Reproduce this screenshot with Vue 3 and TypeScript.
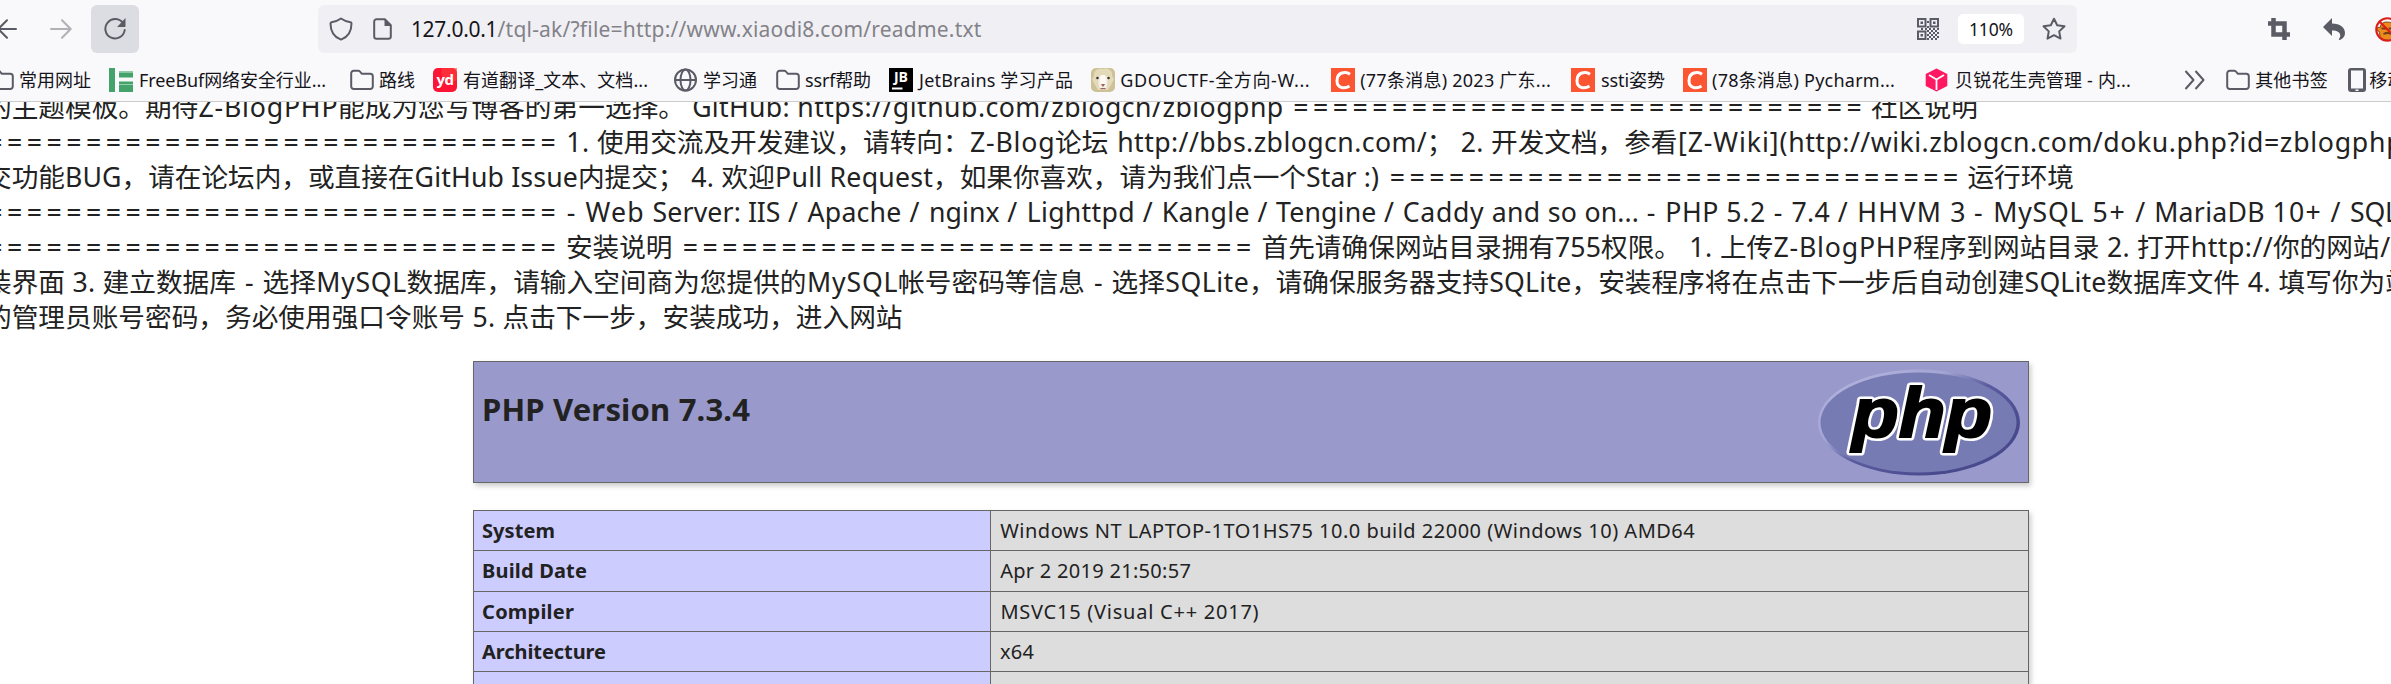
<script setup lang="ts">
type Segment = [text: string, end: number]

interface Bookmark {
  icon: string
  left: number
  label: string
  text: number
  end: number
}

// Spreads letters so that a run of text takes exactly the given width.
const vFit = {
  mounted(el: HTMLElement, binding: { value: number }) {
    const natural = el.getBoundingClientRect().width
    const count = Array.from(el.textContent ?? '').length
    const spacing = (binding.value - natural) / count
    el.style.letterSpacing = `${spacing}px`
    el.style.textIndent = `${spacing / 2}px`
    el.style.width = `${binding.value}px`
  },
}

const lineStart = -15
const rule = '='.repeat(29)

const lines: Segment[][] = [
  [['的主题模板。', 145], ['期待', 198], ['Z-BlogPHP', 338], ['能成为您写博客的第一选择。', 685], [' ', 692], ['GitHub: ', 797], ['https://github.com/zblogcn/zblogphp', 1283.5], [' ', 1291], [rule, 1864], [' ', 1871], ['社区说明', 1978]],
  [[rule, 558], [' ', 566], ['1. ', 597], ['使用交流及开发建议，请转向：', 969.5], ['Z-Blog', 1055], ['论坛', 1108.5], [' ', 1117], ['http://bbs.zblogcn.com/', 1427], ['；', 1453], [' ', 1460.5], ['2. ', 1491], ['开发文档，参看', 1677.5], ['[Z-Wiki](', 1788], ['http://', 1870.5], ['wiki.zblogcn.com/', 2103], ['doku.php?id=', 2279.5], ['zblogphp', 2403]],
  [['交功能', 65], ['BUG', 121.5], ['，请在论坛内，或直接在', 414.5], ['GitHub Issue', 578], ['内提交；', 684.5], [' ', 691], ['4. ', 721.5], ['欢迎', 775], ['Pull Request', 933], ['，如果你喜欢，请为我们点一个', 1306], ['Star :)', 1379], [' ', 1387.5], [rule, 1960.5], [' ', 1967.5], ['运行环境', 2074]],
  [[rule, 558], [' ', 566], ['- ', 585], ['Web ', 652.5], ['Server: ', 748], ['IIS ', 787], ['/ ', 807.5], ['Apache ', 908.5], ['/ ', 929], ['nginx ', 1006.5], ['/ ', 1026.5], ['Lighttpd ', 1142], ['/ ', 1161.5], ['Kangle ', 1257], ['/ ', 1276], ['Tengine ', 1383.5], ['/ ', 1402.5], ['Caddy ', 1491.5], ['and ', 1547.5], ['so ', 1584.5], ['on... ', 1646], ['- ', 1665], ['PHP ', 1726], ['5.2 ', 1773], ['- ', 1791.5], ['7.4 ', 1837], ['/ ', 1856.5], ['HHVM ', 1950], ['3 ', 1973], ['- ', 1993], ['MySQL ', 2091.5], ['5+ ', 2134.5], ['/ ', 2154], ['MariaDB ', 2272], ['10+ ', 2329.5], ['/ ', 2350], ['SQLite', 2430]],
  [[rule, 558], [' ', 566], ['安装说明', 672.5], [' ', 680.5], [rule, 1253.5], [' ', 1261.5], ['首先请确保网站目录拥有', 1555], ['755', 1601], ['权限。', 1681], [' ', 1689], ['1. ', 1720], ['上传', 1773], ['Z-BlogPHP', 1913], ['程序到网站目录', 2099.5], [' ', 2107], ['2. ', 2137], ['打开', 2190.5], ['http://', 2273], ['你的网站', 2379.5], ['/', 2391]],
  [['装界面', 65], [' ', 72.5], ['3. ', 102.5], ['建立数据库', 236], [' - ', 262.5], ['选择', 316], ['MySQL', 406.5], ['数据库，请输入空间商为您提供的', 806.5], ['MySQL', 898], ['帐号密码等信息', 1085], [' - ', 1111.5], ['选择', 1165], ['SQLite', 1249], ['，请确保服务器支持', 1489], ['SQLite', 1571.5], ['，安装程序将在点击下一步后自动创建', 2024.5], ['SQLite', 2106.5], ['数据库文件', 2240], [' ', 2247.5], ['4. ', 2278.5], ['填写你为站', 2412]],
  [['的管理员账号密码，务必使用强口令账号', 465], [' ', 472.5], ['5. ', 502.5], ['点击下一步，安装成功，进入网站', 902.5]],
]

const widthOf = (line: Segment[], i: number): number => line[i][1] - (i ? line[i - 1][1] : lineStart)

const bookmarks: Bookmark[] = [
  { icon: 'folder', left: -10, label: '常用网址', text: 19, end: 91 },
  { icon: 'freebuf', left: 109, label: 'FreeBuf网络安全行业...', text: 139, end: 326 },
  { icon: 'folder', left: 350, label: '路线', text: 379, end: 415 },
  { icon: 'youdao', left: 433, label: '有道翻译_文本、文档...', text: 463, end: 648 },
  { icon: 'globe', left: 674, label: '学习通', text: 703, end: 757 },
  { icon: 'folder', left: 776, label: 'ssrf帮助', text: 805, end: 871 },
  { icon: 'jetbrains', left: 889, label: 'JetBrains 学习产品', text: 919, end: 1073 },
  { icon: 'sheep', left: 1091, label: 'GDOUCTF-全方向-W...', text: 1120, end: 1310 },
  { icon: 'csdn', left: 1331, label: '(77条消息) 2023 广东...', text: 1360, end: 1551 },
  { icon: 'csdn', left: 1571, label: 'ssti姿势', text: 1601, end: 1665 },
  { icon: 'csdn', left: 1683, label: '(78条消息) Pycharm...', text: 1712, end: 1895 },
  { icon: 'cube', left: 1925, label: '贝锐花生壳管理 - 内...', text: 1955, end: 2131 },
  { icon: 'more', left: 2183, label: '', text: 2207, end: 2207 },
  { icon: 'folder', left: 2226, label: '其他书签', text: 2255, end: 2328 },
  { icon: 'phone', left: 2345, label: '移动设备上的书签', text: 2369, end: 2515 },
]

const gapBefore = (i: number): number => bookmarks[i].left - (i ? bookmarks[i - 1].end : 0)

const info = [
  { name: 'System', nameWidth: 73, value: 'Windows NT LAPTOP-1TO1HS75 10.0 build 22000 (Windows 10) AMD64', width: 695 },
  { name: 'Build Date', nameWidth: 105, value: 'Apr 2 2019 21:50:57', width: 191 },
  { name: 'Compiler', nameWidth: 92, value: 'MSVC15 (Visual C++ 2017)', width: 259 },
  { name: 'Architecture', nameWidth: 124, value: 'x64', width: 34 },
  { name: 'Configure Command', nameWidth: 188, value: '', width: 0 },
]
</script>

<template>
  <div class="window">
    <header class="chrome">
      <nav class="toolbar">
        <svg class="back" viewBox="0 0 24 24"><path d="M21 12H4M12 3.2 3.3 12l8.700 8.800" /></svg>
        <svg class="forward" viewBox="0 0 24 24"><path d="M2 12h19.500M13 3.200 21.700 12 13 20.800" /></svg>
        <div class="reload">
          <svg viewBox="0 0 24 24">
            <path d="M20.200 6.500A9.700 9.700 0 1 0 21.700 13" />
            <path class="solid" d="M22.500 1v8.300a.7.7 0 0 1-.7.7h-7.700z" />
          </svg>
        </div>
        <div class="urlbar">
          <svg class="shield" viewBox="0 0 24 24"><path d="M12 1.500c3 2.200 5.800 3.200 9.500 3.700.8 0 1 .5 1 1.200C22.500 14.500 19 20 12 22.600 5 20 1.500 14.500 1.500 6.400c0-.7.3-1.100 1-1.200C6.200 4.700 9 3.700 12 1.500z" /></svg>
          <svg class="page" viewBox="0 0 20 22"><path d="M3.500 1.200h8.300l6 6v11.300a2.300 2.300 0 0 1-2.300 2.300h-12a2.300 2.300 0 0 1-2.300-2.300v-15a2.300 2.300 0 0 1 2.300-2.300z" /><path class="solid" d="M11.500 1v7h6.800z" /></svg>
          <div class="address"><span v-fit="86.5" class="host">127.0.0.1</span><span v-fit="484" class="path">/tql-ak/?file=http://www.xiaodi8.com/readme.txt</span></div>
          <svg class="qr" viewBox="0 0 22 22">
            <path d="M1 1h7.500v7.500H1zM13.500 1H21v7.500h-7.500zM1 13.500h7.500V21H1z" />
            <path class="solid" d="M3.500 3.500H6V6H3.500zM16 3.500h2.500V6H16zM3.500 16H6v2.500H3.500zM10 3h2v2h-2zM10 8h2v2h-2zM4 10h2v2H4zM8 10h2v2H8zM12 10h2v2h-2zM16 10h2v2h-2zM20 10h2v2h-2zM10 12h2v2h-2zM14 12h2v2h-2zM18 12h2v2h-2zM12 14h2v2h-2zM16 14h2v2h-2zM20 14h2v2h-2zM10 16h2v2h-2zM14 16h2v2h-2zM18 16h2v2h-2zM12 18h2v2h-2zM16 18h2v2h-2zM20 18h2v2h-2zM10 20h2v2h-2zM14 20h2v2h-2zM18 20h2v2h-2z" />
          </svg>
          <div class="zoom"><span v-fit="44">110%</span></div>
          <svg class="star" viewBox="0 0 24 24"><path d="m12 1.700 3.200 6.600 7.300 1-5.300 5.100 1.300 7.200L12 18.200l-6.500 3.400 1.300-7.200L1.500 9.300l7.300-1z" /></svg>
        </div>
        <svg class="crop" viewBox="0 0 22 22"><path d="M5.500 0v16.500H22M0 5.500h16.500V22" /></svg>
        <svg class="undo" viewBox="0 0 22 22"><path d="M9 0v5.500c8 0 13 4 13 9.500 0 3-1.700 5.500-4.500 6.800-1.300.4-2-.2-1.300-1 2.800-4.600 0-8.300-7.200-8.300V18L0 9z" /></svg>
        <svg class="blocked" viewBox="0 0 24 24">
          <path class="monkey" d="M5 10c-4-1-4 3-1 4l1 5c3 4 11 4 14 0l1-5c3-1 3-5-1-4-1-7-13-7-14 0z" />
          <path class="face" d="M7 11h4M14 11h4M9 16c2-1 4-1 6 0" />
          <circle cx="12" cy="12" r="10.800" /><path class="slash" d="m4.500 4.500 15 15" />
        </svg>
      </nav>
      <nav class="bookmarks">
        <div v-for="(b, i) in bookmarks" :key="i" class="bookmark" :style="{ marginLeft: gapBefore(i) + 'px', width: b.end - b.left + 'px' }">
          <div class="favicon" :style="{ width: b.text - b.left + 'px' }">
            <svg v-if="b.icon === 'folder'" class="outline" viewBox="0 0 24 24"><path d="M1.200 18.500V5.200a2.500 2.500 0 0 1 2.500-2.500h4.500c.7 0 1.300.3 1.700.8l1.800 2.200h8.600a2.500 2.500 0 0 1 2.500 2.500v10.300a2.500 2.500 0 0 1-2.500 2.500H3.700a2.500 2.500 0 0 1-2.500-2.500z" /></svg>
            <svg v-else-if="b.icon === 'freebuf'" viewBox="0 0 24 24"><path fill="#44a36b" d="M0 0h6v24H0zM10 3.500h14v6H10zM10 13.500h14v3H10zM10 17h14v7H10z" /><path fill="#8ac6a1" d="M10 3.500h14V5H10z" /></svg>
            <svg v-else-if="b.icon === 'youdao'" viewBox="0 0 24 24"><rect width="24" height="24" rx="5" fill="#fc1434" /><circle cx="18" cy="4" r="10" fill="#ff3f3c" opacity=".6" /><text x="12" y="16.500" class="yd">yd</text></svg>
            <svg v-else-if="b.icon === 'globe'" class="outline" viewBox="0 0 24 24"><circle cx="11.500" cy="12" r="10.500" /><ellipse cx="11.500" cy="12" rx="5" ry="10.500" /><path d="M1 12h21" /></svg>
            <svg v-else-if="b.icon === 'jetbrains'" viewBox="0 0 24 24"><path d="M0 0h24v24H0z" /><text x="12" y="14" class="jb">JB</text><path fill="#fff" d="M3 19.500h10.500v2H3z" /></svg>
            <svg v-else-if="b.icon === 'sheep'" viewBox="0 0 24 24"><rect width="24" height="24" rx="5" fill="#cfc196" /><path fill="#e3dab9" d="M3 8C2 3 8-1 12 1c5-2 10 2 9 7l2 3-3 6-3 5H7l-3-5-3-6z" /><path fill="#f5eee6" d="M7 9c3-2 7-2 10 0l-1 10c-2 4-6 4-8 0z" /><path fill="#fffaf4" d="M10 7h4l1 8-3 3-3-3z" /><circle cx="6.500" cy="10" r="1.300" fill="#40352b" /><circle cx="17.500" cy="10" r="1.300" fill="#40352b" /><path fill="#99645b" d="M10 16h4l-1.500 2.500h-1zM9.500 20h5v1.200h-5z" /></svg>
            <svg v-else-if="b.icon === 'csdn'" viewBox="0 0 24 24"><path fill="#fc5531" d="M0 0h24v24H0z" /><path class="c-mark" d="M19 6.200C14.500 2.800 6 4.200 6 12.700c0 8 8 8.200 12.500 5.200" /></svg>
            <svg v-else-if="b.icon === 'cube'" viewBox="0 0 24 24"><path fill="#ff1762" d="m11.500.5 10.800 5.500v12l-10.800 5.500L.7 18V6z" /><path class="seam" d="m4 7 7.500 4.500L19 7M11.500 11.500V22" /></svg>
            <svg v-else-if="b.icon === 'more'" class="outline" viewBox="0 0 24 24"><path d="m2.500 3 8 9-8 9M12.500 3l8 9-8 9" /></svg>
            <svg v-else viewBox="0 0 24 24"><path fill="#5b5b66" fill-rule="evenodd" d="M6 0h12a3 3 0 0 1 3 3v18a3 3 0 0 1-3 3H6a3 3 0 0 1-3-3V3a3 3 0 0 1 3-3zm0 2.500v18h12v-18zM10.500 21.500h3V23h-3z" /></svg>
          </div>
          <span v-if="b.label" v-fit="b.end - b.text" class="label">{{ b.label }}</span>
        </div>
      </nav>
    </header>

    <main class="document">
      <section class="readme">
        <p v-for="(line, n) in lines" :key="n" class="line"><span v-for="(seg, i) in line" :key="i" v-fit="widthOf(line, i)" class="seg">{{ seg[0] }}</span></p>
      </section>
      <section class="banner">
        <h1><span v-fit="268">PHP Version 7.3.4</span></h1>
        <svg class="logo" viewBox="0 0 202 108">
          <defs>
            <linearGradient id="rim" x1="0.100" y1="0.100" x2="0.800" y2="0.750">
              <stop offset="0" stop-color="#b2b2dc" />
              <stop offset="0.350" stop-color="#a3a5d3" />
              <stop offset="0.600" stop-color="#5a5c9f" />
              <stop offset="1" stop-color="#484a8d" />
            </linearGradient>
          </defs>
          <ellipse cx="101" cy="53.500" rx="101" ry="53" fill="url(#rim)" />
          <ellipse cx="100.500" cy="53.500" rx="98" ry="50" fill="#777bb3" />
          <text x="34" y="68" textLength="140" lengthAdjust="spacingAndGlyphs" class="halo">php</text>
          <text x="34" y="68" textLength="140" lengthAdjust="spacingAndGlyphs" class="letters" aria-hidden="true">php</text>
        </svg>
      </section>
      <section class="table">
        <div v-for="row in info" :key="row.name" class="row">
          <div class="name"><span v-fit="row.nameWidth">{{ row.name }}</span></div>
          <div class="value"><span v-if="row.value" v-fit="row.width">{{ row.value }}</span></div>
        </div>
      </section>
    </main>
  </div>
</template>

<style>
body {
  margin: 0;
  overflow: hidden;
  background: #fff;
}
</style>

<style scoped>
.window {
  width: 2391px;
  height: 684px;
  overflow: hidden;
  display: flex;
  flex-direction: column;
  background: #fff;
  color: #222;
  font-family: "Noto Sans", "Noto Sans CJK SC", sans-serif;
}
.window * {
  box-sizing: border-box;
}
span {
  display: inline-block;
  flex: none;
  white-space: pre;
}
svg {
  display: block;
  flex: none;
}
.chrome {
  flex: none;
  height: 102px;
  background: #f9f9fb;
  border-bottom: 1px solid #ccc;
  color: #15141a;
}
.toolbar {
  display: flex;
  align-items: center;
  height: 58px;
}
.toolbar > * {
  flex: none;
}
.toolbar svg path,
.toolbar svg circle {
  fill: none;
  stroke: #5b5b66;
  stroke-width: 2;
  stroke-linecap: round;
  stroke-linejoin: round;
}
.toolbar svg path.solid {
  fill: #5b5b66;
  stroke: none;
}
.back {
  width: 24px;
  height: 24px;
  margin-left: -5px;
}
.forward {
  width: 24px;
  height: 24px;
  margin-left: 30px;
  opacity: 0.45;
}
.reload {
  display: flex;
  align-items: center;
  justify-content: center;
  width: 48px;
  height: 48px;
  margin-left: 18px;
  border-radius: 6px;
  background: #dcdde3;
}
.reload svg {
  width: 24px;
  height: 24px;
}
.urlbar {
  display: flex;
  align-items: center;
  width: 1759px;
  height: 48px;
  margin-left: 179px;
  border-radius: 6px;
  background: #f0f0f4;
}
.shield {
  width: 24px;
  height: 24px;
  margin-left: 11px;
}
.page {
  width: 20px;
  height: 22px;
  margin-left: 20px;
}
.address {
  display: flex;
  flex: none;
  width: 1506px;
  margin-left: 18px;
  font-size: 21px;
  line-height: 30px;
}
.path {
  color: #838289;
}
.qr {
  width: 22px;
  height: 22px;
}
.toolbar svg.qr path:first-child {
  stroke-linejoin: miter;
}
.zoom {
  display: flex;
  flex: none;
  align-items: center;
  justify-content: center;
  width: 66px;
  height: 30px;
  margin-left: 19px;
  border-radius: 5px;
  background: #fff;
  font-size: 17.500px;
  line-height: 30px;
}
.star {
  width: 24px;
  height: 24px;
  margin-left: 18px;
}
.crop {
  width: 22px;
  height: 22px;
  margin-left: 191px;
}
.toolbar svg.crop path {
  stroke-width: 4.500;
  stroke-linecap: butt;
  stroke-linejoin: miter;
}
.undo {
  width: 22px;
  height: 22px;
  margin-left: 33px;
}
.toolbar svg.undo path {
  fill: #5b5b66;
  stroke: none;
}
.blocked {
  width: 25px;
  height: 25px;
  margin-left: 30px;
}
.toolbar svg path.monkey {
  fill: #ed8b1d;
  stroke: #875321;
  stroke-width: 1;
}
.toolbar svg path.face {
  stroke: #704018;
}
.toolbar svg.blocked circle,
.toolbar svg path.slash {
  stroke: #df1d18;
}
.bookmarks {
  display: flex;
  align-items: center;
  height: 43px;
}
.bookmark {
  display: flex;
  flex: none;
  align-items: center;
  font-size: 18px;
  line-height: 28px;
}
.favicon {
  flex: none;
}
.favicon svg {
  width: 24px;
  height: 24px;
}
.outline {
  fill: none;
  stroke: #5b5b66;
  stroke-width: 2;
  stroke-linejoin: round;
}
.yd {
  fill: #fff;
  font: bold 15px "Open Sans", sans-serif;
  text-anchor: middle;
  letter-spacing: -0.500px;
}
.jb {
  fill: #fff;
  font: bold 14px "Open Sans", sans-serif;
  text-anchor: middle;
}
.c-mark {
  fill: none;
  stroke: #fff;
  stroke-width: 3;
}
.seam {
  fill: none;
  stroke: #fff;
  stroke-width: 1.800;
}
.document {
  display: flex;
  flex: 1;
  flex-direction: column;
  min-height: 0;
  overflow: hidden;
}
.document > * {
  flex: none;
}
.readme {
  height: 272px;
  margin-top: -13px;
}
.line {
  display: flex;
  height: 35px;
  margin: 0 0 0 -15px;
  font-size: 26.670px;
  line-height: 35px;
}
.banner {
  display: flex;
  justify-content: space-between;
  width: 1556px;
  height: 122px;
  margin: 0 0 27px 473px;
  padding: 7px 8px 0;
  border: 1px solid #666;
  background: #9999cc;
  box-shadow: 2px 3px 5px #ccc;
}
h1 {
  margin: 18px 0 0;
  font-size: 31px;
  line-height: 44px;
}
.logo {
  width: 202px;
  height: 108px;
}
.logo text {
  font: italic bold 70px "Liberation Sans", sans-serif;
}
.halo {
  fill: #fff;
  stroke: #fff;
  stroke-width: 7px;
  stroke-linejoin: round;
}
.letters {
  fill: #000;
  stroke: #000;
  stroke-width: 2px;
}
.table {
  width: 1556px;
  margin-left: 473px;
  border: 1px solid #666;
  box-shadow: 2px 3px 5px #ccc;
  font-size: 20px;
  line-height: 27px;
}
.row {
  display: flex;
  height: 40.300px;
  border-bottom: 1px solid #666;
}
.name {
  width: 517px;
  padding: 6px 8px;
  border-right: 1px solid #666;
  background: #ccccff;
  font-weight: bold;
}
.value {
  flex: 1;
  padding: 6px 9px;
  background: #ddd;
}
</style>
